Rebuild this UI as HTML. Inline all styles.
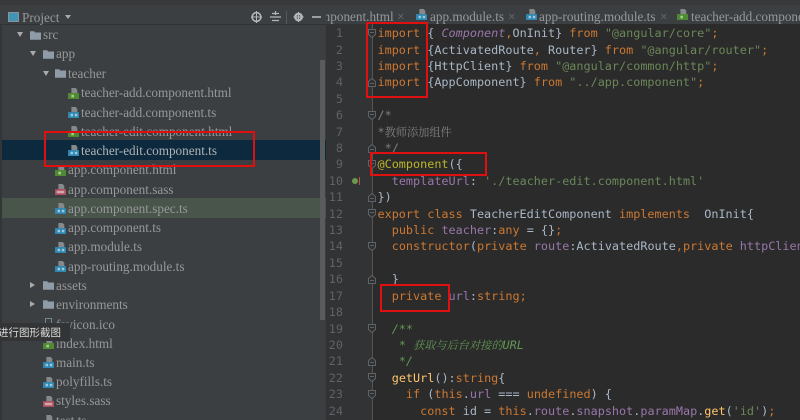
<!DOCTYPE html>
<html><head><meta charset="utf-8">
<style>
html,body{margin:0;padding:0;background:#3c3f41}
#r{position:relative;width:800px;height:420px;overflow:hidden;background:#3c3f41;filter:blur(.35px)}
.a{position:absolute}
.s{position:absolute;white-space:pre;font:13.2px/19px "Liberation Serif","Noto Serif CJK SC",serif;color:#96989a;height:19px}
.c{position:absolute;left:377.5px;white-space:pre;font:11.8px/16px "DejaVu Sans Mono",monospace;color:#a9b7c6;height:16px}
.z{font-family:"Noto Serif CJK SC",serif;font-size:11.2px}
.n{position:absolute;left:326px;width:17px;text-align:right;white-space:pre;font:11.8px/16px "DejaVu Sans Mono",monospace;color:#606366}
.k{color:#cc7832}.t{color:#6a8759}.p{color:#9876aa}.y{color:#ffc66d}.b{color:#bbb529}.g{color:#808080}.d{color:#629755}.i{font-style:italic}
.box{position:absolute;border:2px solid #e01010;box-sizing:border-box}
svg.f{position:absolute;width:8px;height:9px;left:368px}
svg.ic{position:absolute;width:11px;height:11px}
svg.fo{position:absolute;width:11px;height:9px}
</style></head><body>
<div id="r">
<svg width="0" height="0" style="position:absolute"><defs>
<symbol id="h" viewBox="0 0 13 13"><path d="M4 0h5l2 2v5H4z" fill="#85898c"/><rect x="0" y="6" width="13" height="7" fill="#4f8a32"/><rect x="4" y="8" width="3" height="3" fill="#a8cc98"/></symbol>
<symbol id="j" viewBox="0 0 13 13"><path d="M4 0h5l2 2v5H4z" fill="#85898c"/><rect x="0" y="6" width="13" height="7" fill="#2f86b0"/><rect x="3" y="8" width="3" height="3" fill="#9cc8de"/><rect x="8" y="8" width="3" height="3" fill="#9cc8de"/></symbol>
<symbol id="m" viewBox="0 0 13 13"><path d="M4 0h5l2 2v5H4z" fill="#85898c"/><rect x="0" y="6" width="13" height="7" fill="#a8505e"/><rect x="2" y="8" width="9" height="3" fill="#d8a4ac"/></symbol>
<symbol id="o" viewBox="0 0 13 10"><path d="M0 0h5l1 1.500h7V10H0z" fill="#8f9ba6"/></symbol>
<symbol id="fd" viewBox="0 0 8 9"><path d="M.5.500h7v5L4 8.500.5 5.500z" fill="#2f3032" stroke="#606366"/><path d="M2 3.500h4" stroke="#606366"/></symbol>
<symbol id="fu" viewBox="0 0 8 9"><path d="M.5 8.500h7v-5L4 .500.500 3.500z" fill="#2f3032" stroke="#606366"/><path d="M2 5.500h4" stroke="#606366"/></symbol>
</defs></svg>

<!-- top strip -->
<div class="a" style="left:0;top:0;width:800px;height:5px;background:#37393b"></div>

<!-- sidebar -->
<div class="a" style="left:0;top:24px;width:326px;height:1px;background:#323232"></div>
<div class="a" style="left:0;top:25px;width:2px;height:395px;background:#333536"></div>
<div class="a" style="left:8px;top:12px;width:9px;height:8px;border:1px solid #8a9298;background:#3f94b8"></div>
<div class="s" style="left:22px;top:8px">Project</div>
<div class="a" style="left:65px;top:15px;width:0;height:0;border:3px solid transparent;border-top:4px solid #a8aaac;border-bottom:0"></div>
<svg class="a" style="left:250px;top:10px" width="80" height="14" viewBox="0 0 80 14"><circle cx="6.500" cy="7" r="4.400" fill="none" stroke="#b4b6b8" stroke-width="1.600"/><path d="M6.500 1v12M1 7h11" stroke="#b4b6b8" stroke-width="1"/><path d="M20 7h11M22 3.500h7M25.500 1v4M22 10.500h7" stroke="#b4b6b8" stroke-width="1.200" fill="none"/><path d="M36.500 1v13" stroke="#55585a"/><circle cx="48.500" cy="7" r="3.200" fill="none" stroke="#b4b6b8" stroke-width="2.400"/><path d="M48.500 2v10M43.500 7h10" stroke="#b4b6b8" stroke-width="1.200"/><path d="M62 7h9" stroke="#b4b6b8" stroke-width="1.600"/></svg>

<div class="a" style="left:2px;top:140px;width:324px;height:20px;background:#0d293e"></div>
<div class="a" style="left:2px;top:198px;width:324px;height:20px;background:#49544a"></div>
<div class="a" style="left:320px;top:60px;width:5px;height:260px;background:#595b5d"></div>

<div class="a" style="left:17px;top:32px;border:3.500px solid transparent;border-top:5px solid #a8aaac;border-bottom:0"></div>
<svg class="fo" style="left:30px;top:31px"><use href="#o"/></svg><div class="s" style="left:43px;top:25px">src</div>
<div class="a" style="left:30px;top:51px;border:3.500px solid transparent;border-top:5px solid #a8aaac;border-bottom:0"></div>
<svg class="fo" style="left:43px;top:50px"><use href="#o"/></svg><div class="s" style="left:56px;top:44px">app</div>
<div class="a" style="left:43px;top:71px;border:3.500px solid transparent;border-top:5px solid #a8aaac;border-bottom:0"></div>
<svg class="fo" style="left:55px;top:69px"><use href="#o"/></svg><div class="s" style="left:68px;top:64px">teacher</div>

<svg class="ic" style="left:68px;top:88px"><use href="#h"/></svg><div class="s" style="left:81px;top:83px">teacher-add.component.html</div>
<svg class="ic" style="left:68px;top:107px"><use href="#j"/></svg><div class="s" style="left:81px;top:103px">teacher-add.component.ts</div>
<svg class="ic" style="left:68px;top:126px"><use href="#h"/></svg><div class="s" style="left:81px;top:122px">teacher-edit.component.html</div>
<svg class="ic" style="left:68px;top:145px"><use href="#j"/></svg><div class="s" style="left:81px;top:141px;color:#aeb2b5">teacher-edit.component.ts</div>
<svg class="ic" style="left:55px;top:165px"><use href="#h"/></svg><div class="s" style="left:68px;top:160px">app.component.html</div>
<svg class="ic" style="left:55px;top:184px"><use href="#m"/></svg><div class="s" style="left:68px;top:180px">app.component.sass</div>
<svg class="ic" style="left:55px;top:203px"><use href="#j"/></svg><div class="s" style="left:68px;top:199px">app.component.spec.ts</div>
<svg class="ic" style="left:55px;top:223px"><use href="#j"/></svg><div class="s" style="left:68px;top:218px">app.component.ts</div>
<svg class="ic" style="left:55px;top:242px"><use href="#j"/></svg><div class="s" style="left:68px;top:237px">app.module.ts</div>
<svg class="ic" style="left:55px;top:261px"><use href="#j"/></svg><div class="s" style="left:68px;top:257px">app-routing.module.ts</div>

<div class="a" style="left:30px;top:282px;border:3.500px solid transparent;border-left:5px solid #a8aaac;border-right:0"></div>
<svg class="fo" style="left:43px;top:281px"><use href="#o"/></svg><div class="s" style="left:56px;top:276px">assets</div>
<div class="a" style="left:30px;top:301px;border:3.500px solid transparent;border-left:5px solid #a8aaac;border-right:0"></div>
<svg class="fo" style="left:43px;top:300px"><use href="#o"/></svg><div class="s" style="left:56px;top:295px">environments</div>
<div class="s" style="left:56px;top:315px">favicon.ico</div>
<div class="a" style="left:45px;top:318px;width:7px;height:6px;border:1px solid #6f8794;box-sizing:border-box"></div>
<svg class="ic" style="left:43px;top:338px"><use href="#h"/></svg><div class="s" style="left:56px;top:334px">index.html</div>
<svg class="ic" style="left:43px;top:357px"><use href="#j"/></svg><div class="s" style="left:56px;top:353px">main.ts</div>
<svg class="ic" style="left:43px;top:377px"><use href="#j"/></svg><div class="s" style="left:56px;top:372px">polyfills.ts</div>
<svg class="ic" style="left:43px;top:396px"><use href="#m"/></svg><div class="s" style="left:56px;top:391px">styles.sass</div>
<svg class="ic" style="left:43px;top:415px"><use href="#j"/></svg><div class="s" style="left:56px;top:411px">test.ts</div>

<div class="a" style="left:0;top:323px;width:70px;height:18px;background:#333435"></div>
<div class="a" style="left:-2px;top:323.500px;white-space:pre;font:10.500px/18px 'Noto Sans CJK SC',sans-serif;color:#dcdcdc">进行图形截图</div>

<!-- tabs -->
<div class="a" style="left:326px;top:5px;width:474px;height:19px;background:#3c3f41;overflow:hidden">
<div class="s" style="left:-6px;top:2px">mponent.html</div>
<div class="s" style="left:71px;top:2px;color:#6f7173">×</div>
<svg class="ic" style="left:90px;top:4px"><use href="#j"/></svg><div class="s" style="left:104px;top:2px">app.module.ts</div>
<div class="s" style="left:182px;top:2px;color:#6f7173">×</div>
<svg class="ic" style="left:200px;top:4px"><use href="#j"/></svg><div class="s" style="left:213px;top:2px">app-routing.module.ts</div>
<div class="s" style="left:334px;top:2px;color:#6f7173">×</div>
<svg class="ic" style="left:351px;top:4px"><use href="#h"/></svg><div class="s" style="left:365px;top:2px">teacher-add.component.html</div>
</div>

<!-- editor -->
<div class="a" style="left:326px;top:24px;width:474px;height:396px;background:#2b2b2b"></div>
<div class="a" style="left:326px;top:24px;width:46px;height:396px;background:#313335"></div>
<div class="a" style="left:372px;top:24px;width:1px;height:396px;background:#555"></div>

<div class="n" style="top:25px">1</div><div class="n" style="top:41.500px">2</div><div class="n" style="top:58px">3</div><div class="n" style="top:74.400px">4</div><div class="n" style="top:90.800px">5</div><div class="n" style="top:107.200px">6</div><div class="n" style="top:123.600px">7</div><div class="n" style="top:140px">8</div><div class="n" style="top:156.400px">9</div><div class="n" style="top:172.800px">10</div><div class="n" style="top:189.200px">11</div><div class="n" style="top:205.600px">12</div><div class="n" style="top:222px">13</div><div class="n" style="top:238.400px">14</div><div class="n" style="top:254.800px">15</div><div class="n" style="top:271.200px">16</div><div class="n" style="top:287.600px">17</div><div class="n" style="top:304px">18</div><div class="n" style="top:320.500px">19</div><div class="n" style="top:337px">20</div><div class="n" style="top:353.300px">21</div><div class="n" style="top:369.700px">22</div><div class="n" style="top:386px">23</div><div class="n" style="top:402.500px">24</div>

<svg class="f" style="top:29px"><use href="#fd"/></svg>
<svg class="f" style="top:78px"><use href="#fu"/></svg>
<svg class="f" style="top:111px"><use href="#fd"/></svg>
<svg class="f" style="top:144px"><use href="#fu"/></svg>
<svg class="f" style="top:160px"><use href="#fd"/></svg>
<svg class="f" style="top:193px"><use href="#fu"/></svg>
<svg class="f" style="top:209px"><use href="#fd"/></svg>
<svg class="f" style="top:242px"><use href="#fd"/></svg>
<svg class="f" style="top:275px"><use href="#fu"/></svg>
<svg class="f" style="top:324px"><use href="#fd"/></svg>
<svg class="f" style="top:357px"><use href="#fu"/></svg>
<svg class="f" style="top:373px"><use href="#fd"/></svg>
<svg class="f" style="top:390px"><use href="#fd"/></svg>

<div class="a" style="left:352px;top:178px;width:6px;height:6px;border-radius:50%;background:#6a9a4a"></div>
<div class="a" style="left:358.500px;top:177px;width:1px;height:8px;background:#c0504d"></div>

<div class="c" style="top:25px"><span class="k">import</span> { <span class="p i">Component</span><span class="k">,</span>OnInit} <span class="k">from</span> <span class="t">"@angular/core"</span><span class="k">;</span></div>
<div class="c" style="top:41.500px"><span class="k">import</span> {ActivatedRoute<span class="k">,</span> Router} <span class="k">from</span> <span class="t">"@angular/router"</span><span class="k">;</span></div>
<div class="c" style="top:58px"><span class="k">import</span> {HttpClient} <span class="k">from</span> <span class="t">"@angular/common/http"</span><span class="k">;</span></div>
<div class="c" style="top:74.400px"><span class="k">import</span> {AppComponent} <span class="k">from</span> <span class="t">"../app.component"</span><span class="k">;</span></div>
<div class="c g" style="top:107.200px">/*</div>
<div class="c g" style="top:123.600px">*<span class="z">教师添加组件</span></div>
<div class="c g" style="top:140px"> */</div>
<div class="c" style="top:156.400px"><span class="b">@Component</span>({</div>
<div class="c" style="top:172.800px">  <span class="p">templateUrl</span>: <span class="t">'./teacher-edit.component.html'</span></div>
<div class="c" style="top:189.200px">})</div>
<div class="c" style="top:205.600px"><span class="k">export class</span> TeacherEditComponent <span class="k">implements</span>  OnInit{</div>
<div class="c" style="top:222px">  <span class="k">public</span> <span class="p">teacher</span>:<span class="k">any</span> = {}<span class="k">;</span></div>
<div class="c" style="top:238.400px">  <span class="k">constructor</span>(<span class="k">private</span> <span class="p">route</span>:ActivatedRoute<span class="k">,private</span> <span class="p">httpClient</span>:HttpClient</div>
<div class="c" style="top:271.200px">  }</div>
<div class="c" style="top:287.600px">  <span class="k">private</span> <span class="p">url</span>:<span class="k">string;</span></div>
<div class="c d i" style="top:320.500px">  /**</div>
<div class="c d i" style="top:337px">   * <span class="z">获取与后台对接的</span>URL</div>
<div class="c d i" style="top:353.300px">   */</div>
<div class="c" style="top:369.700px">  <span class="y">getUrl</span>():<span class="k">string</span>{</div>
<div class="c" style="top:386px">    <span class="k">if</span> (<span class="k">this</span>.<span class="p">url</span> === <span class="k">undefined</span>) {</div>
<div class="c" style="top:402.500px">      <span class="k">const</span> id = <span class="k">this</span>.<span class="p">route</span>.<span class="p">snapshot</span>.<span class="p">paramMap</span>.<span class="y">get</span>(<span class="t">'id'</span>)<span class="k">;</span></div>

<!-- red boxes -->
<div class="box" style="left:44px;top:131px;width:211px;height:36px"></div>
<div class="box" style="left:366px;top:22px;width:62px;height:76px"></div>
<div class="box" style="left:370px;top:152px;width:117px;height:24px"></div>
<div class="box" style="left:380px;top:284px;width:70px;height:28px"></div>
</div>
</body></html>
